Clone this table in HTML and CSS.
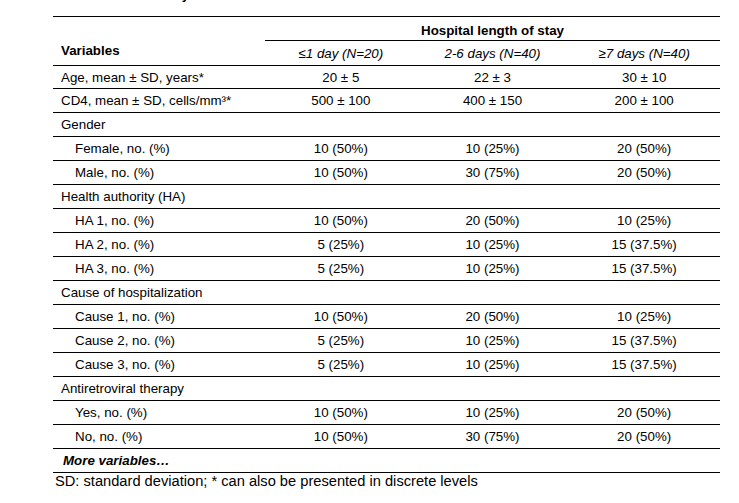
FILE: index.html
```html
<!DOCTYPE html>
<html lang="en">
<head>
<meta charset="utf-8">
<title>Hospital length of stay</title>
<link rel="stylesheet" href="styles.css">
</head>
<body>
<div class="page">
  <div class="title">Table 1. Summary</div>
  <div class="tbl">
    <div class="row head1">
      <div></div>
      <div class="span">Hospital length of stay</div>
    </div>
    <div class="row head2">
      <div class="lab var">Variables</div>
      <div class="num ital">≤1 day (N=20)</div>
      <div class="num ital">2-6 days (N=40)</div>
      <div class="num ital">≥7 days (N=40)</div>
    </div>
    <div class="row short">
      <div class="lab">Age, mean ± SD, years*</div>
      <div class="num">20 ± 5</div><div class="num">22 ± 3</div><div class="num">30 ± 10</div>
    </div>
    <div class="row">
      <div class="lab">CD4, mean ± SD, cells/mm³*</div>
      <div class="num">500 ± 100</div><div class="num">400 ± 150</div><div class="num">200 ± 100</div>
    </div>
    <div class="row"><div class="lab">Gender</div></div>
    <div class="row">
      <div class="lab sub">Female, no. (%)</div>
      <div class="num">10 (50%)</div><div class="num">10 (25%)</div><div class="num">20 (50%)</div>
    </div>
    <div class="row">
      <div class="lab sub">Male, no. (%)</div>
      <div class="num">10 (50%)</div><div class="num">30 (75%)</div><div class="num">20 (50%)</div>
    </div>
    <div class="row"><div class="lab">Health authority (HA)</div></div>
    <div class="row">
      <div class="lab sub">HA 1, no. (%)</div>
      <div class="num">10 (50%)</div><div class="num">20 (50%)</div><div class="num">10 (25%)</div>
    </div>
    <div class="row">
      <div class="lab sub">HA 2, no. (%)</div>
      <div class="num">5 (25%)</div><div class="num">10 (25%)</div><div class="num">15 (37.5%)</div>
    </div>
    <div class="row">
      <div class="lab sub">HA 3, no. (%)</div>
      <div class="num">5 (25%)</div><div class="num">10 (25%)</div><div class="num">15 (37.5%)</div>
    </div>
    <div class="row"><div class="lab">Cause of hospitalization</div></div>
    <div class="row">
      <div class="lab sub">Cause 1, no. (%)</div>
      <div class="num">10 (50%)</div><div class="num">20 (50%)</div><div class="num">10 (25%)</div>
    </div>
    <div class="row">
      <div class="lab sub">Cause 2, no. (%)</div>
      <div class="num">5 (25%)</div><div class="num">10 (25%)</div><div class="num">15 (37.5%)</div>
    </div>
    <div class="row">
      <div class="lab sub">Cause 3, no. (%)</div>
      <div class="num">5 (25%)</div><div class="num">10 (25%)</div><div class="num">15 (37.5%)</div>
    </div>
    <div class="row"><div class="lab">Antiretroviral therapy</div></div>
    <div class="row">
      <div class="lab sub">Yes, no. (%)</div>
      <div class="num">10 (50%)</div><div class="num">10 (25%)</div><div class="num">20 (50%)</div>
    </div>
    <div class="row">
      <div class="lab sub">No, no. (%)</div>
      <div class="num">10 (50%)</div><div class="num">30 (75%)</div><div class="num">20 (50%)</div>
    </div>
    <div class="row"><div class="lab more">More variables…</div></div>
  </div>
  <div class="foot">SD: standard deviation; * can also be presented in discrete levels</div>
</div>
</body>
</html>
```

FILE: styles.css
```css
html, body {
  margin: 0;
  padding: 0;
  background: #fff;
}

body {
  font-family: "Liberation Sans", Arial, sans-serif;
  color: #000;
  font-size: 13.33px;
}

.page {
  width: 667px;
  margin-left: 53px;
  overflow: hidden;
}

.title {
  font-weight: bold;
  line-height: 16px;
  height: 16px;
  margin-top: -13px;
  margin-bottom: 13px;
  padding-left: 23px;
  white-space: nowrap;
}

.tbl {
  border-top: 1px solid #000;
}

.row {
  display: grid;
  grid-template-columns: 212px repeat(3, 1fr);
  height: 23px;
  align-items: center;
  border-bottom: 1px solid #000;
  white-space: nowrap;
}

.row.short {
  height: 22px;
}

.head1 {
  height: 24px;
  border-bottom: none;
  align-items: stretch;
}

.head1 .span {
  grid-column: 2 / 5;
  box-sizing: border-box;
  border-bottom: 1px solid #000;
  font-weight: bold;
  text-align: center;
  padding-top: 6px;
}

.head2 {
  height: 24px;
}

.lab {
  padding-left: 8px;
}

.lab.sub {
  padding-left: 22px;
}

.var {
  font-weight: bold;
  padding-bottom: 5px;
}

.more {
  font-weight: bold;
  font-style: italic;
  padding-left: 10px;
}

.num {
  text-align: center;
}

.ital {
  font-style: italic;
  padding-top: 1px;
}

.foot {
  font-size: 14.67px;
  padding-left: 2px;
  padding-top: 0;
}
```
